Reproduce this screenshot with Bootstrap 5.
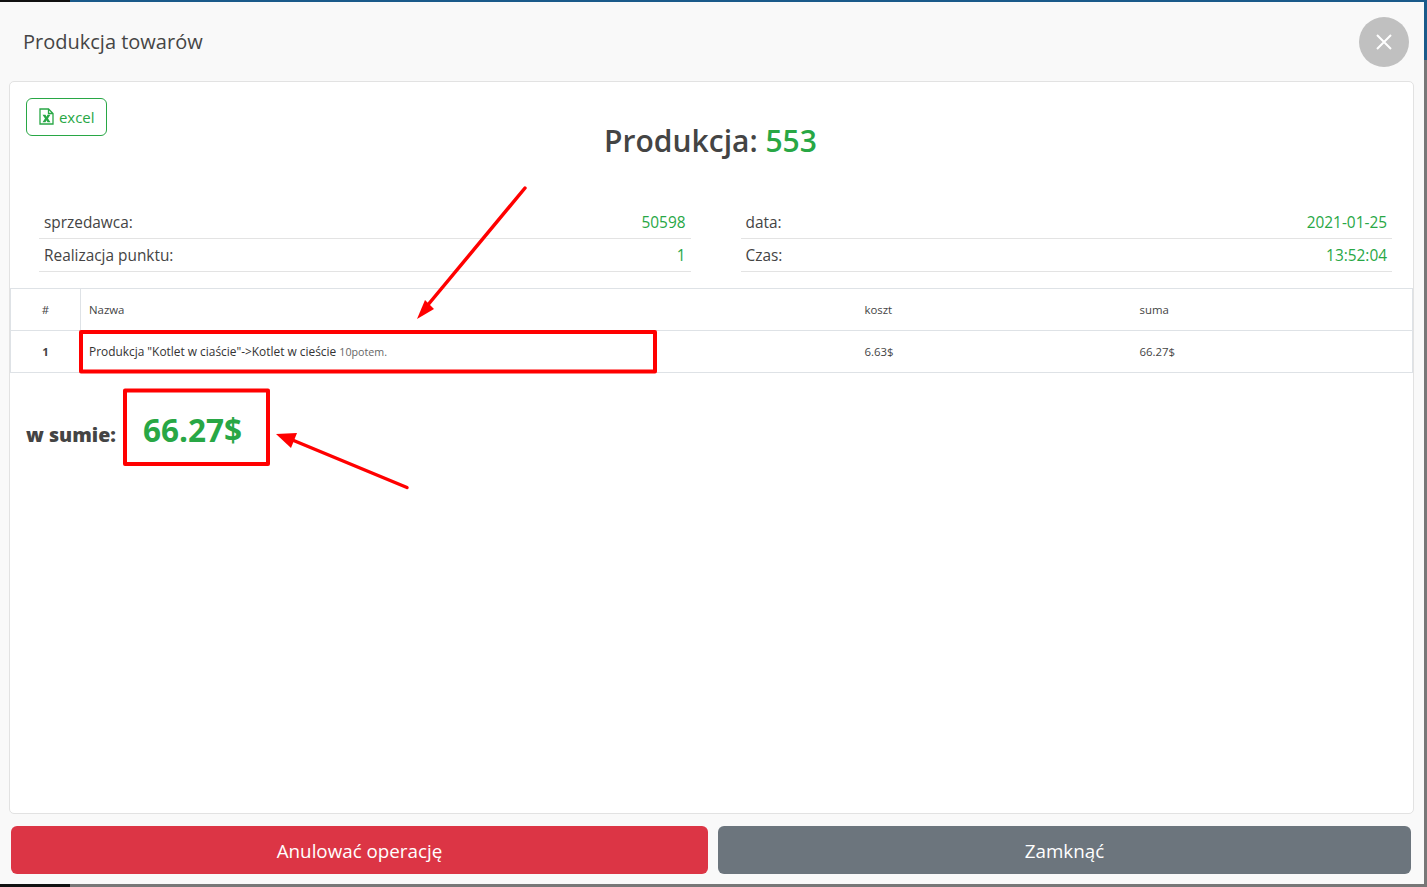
<!DOCTYPE html>
<html lang="pl">
<head>
  <meta charset="UTF-8">
  <title>Produkcja towarów</title>
  <link href="https://cdn.jsdelivr.net/npm/bootstrap@5.3.0/dist/css/bootstrap.min.css" rel="stylesheet">
  <style>
    html, body { height: 100%; overflow: hidden; }
    body { background: #777; font-family: "Open Sans", "Noto Sans", sans-serif; color: #444; position: relative; }
    .top-strip { height: 2px; background: linear-gradient(to right, #111 70px, #1a5a8a 70px); }
    .side-blue { position: absolute; right: 0; top: 0; width: 10px; height: 60px; background: #1a5a8a; }
    .bottom-black { position: absolute; left: 0; bottom: 0; width: 70px; height: 3px; background: #111; }
    .dlg { width: 1424px; height: 882px; background: #f9f9f9; position: relative; z-index: 1; }
    .dlg-head { height: 79px; padding-left: 23px; padding-right: 15px; }
    .dlg-title { font-size: 20px; color: #454545; margin: 0; font-weight: 400; }
    .close-round { width: 50px; height: 50px; border-radius: 50%; background: #c0c0c0; border: 0; padding: 0; }
    .dlg-panel { margin: 0 10px 0 9px; height: 733px; border: 1px solid #e2e2e2; border-radius: 5px; background: #fff; padding-top: 16px; }
    .excel-btn { --bs-btn-padding-x: 12px; --bs-btn-padding-y: 0; --bs-btn-font-size: 15px; height: 38px; width: 81px; line-height: 37px; color: #28a745; border-color: #28a745; white-space: nowrap; }
    .excel-btn svg { vertical-align: -2px; margin-right: 1px; }
    .panel-top { padding-left: 16px; height: 108px; position: relative; }
    .doc-title { font-size: 30px; font-weight: 600; color: #444; text-align: center; margin: 0; padding-top: 22px; padding-right: 2px; position: absolute; left: 0; right: 0; top: 0; line-height: 41px; }
    .txt-ok { color: #28a745; }
    .info-grid { padding-left: 29px; padding-right: 21px; column-gap: 50px; display: grid; grid-template-columns: 1fr 1fr; height: 82px; }
    .info-line { height: 33px; border-bottom: 1px solid #e3e3e3; padding: 0 5px 0 5px; font-size: 15.4px; line-height: 34px; color: #444; display: flex; justify-content: space-between; }
    .goods { width: 100%; font-size: 11.4px; table-layout: fixed; }
    .goods th, .goods td { height: 42px; padding: 0 8px; vertical-align: middle; font-weight: 400; color: #444; border-width: 1px 0; border-style: solid; border-color: #dee2e6; }
    .goods tr > :first-child { border-left-width: 1px; border-right-width: 1px; }
    .goods tr > :last-child { border-right-width: 1px; }
    .goods .num { text-align: center; width: 70px; }
    .goods tbody td:first-child { font-weight: 700; }
    .goods .item { color: #333; font-size: 11.9px; }
    .goods .unit { color: #666; font-size: 10.7px; }
    .total-line { padding: 25px 0 0 16px; height: 89px; display: flex; align-items: center; }
    .total-lbl { font-size: 19.6px; font-weight: 800; color: #444; width: 117px; margin-top: 9px; }
    .total-val { font-size: 31.500px; font-weight: 700; color: #28a745; }
    .dlg-foot { padding: 12px 13px 0 11px; display: flex; gap: 10px; }
    .foot-btn { height: 48px; font-size: 18.8px; padding: 2px 0 0; border: 0; }
    .foot-cancel { flex: 0 0 697px; }
    .foot-close { flex: 1 1 0; }
    .marks { position: absolute; left: 0; top: 0; z-index: 2; pointer-events: none; }
  </style>
</head>
<body>
  <div class="top-strip"></div>
  <div class="side-blue"></div>
  <div class="bottom-black"></div>

  <div class="dlg">
    <div class="dlg-head d-flex align-items-center justify-content-between">
      <h5 class="dlg-title">Produkcja towarów</h5>
      <button type="button" class="close-round d-flex align-items-center justify-content-center" aria-label="Close">
        <svg width="16" height="16" viewBox="0 0 16 16"><path d="M1 1 15 15M15 1 1 15" stroke="#fff" stroke-width="2" fill="none"/></svg>
      </button>
    </div>

    <div class="dlg-panel">
      <div class="panel-top">
        <h2 class="doc-title">Produkcja: <span class="txt-ok">553</span></h2>
        <a href="#" class="btn excel-btn position-relative">
          <svg width="15" height="17" viewBox="0 0 15 17"><path d="M1 1h8.500L14 5.500V16H1zM9.500 1v4.500H14" fill="none" stroke="#28a745" stroke-width="1.300"/><path d="M3.500 6.800h3l1 1.900 1-1.900h2.900L9 10.400l2.500 3.900H8.500l-1-2-1 2H3.500L6 10.400z" fill="#28a745"/></svg>
          excel
        </a>
      </div>

      <div class="info-grid">
        <div>
          <div class="info-line"><span>sprzedawca:</span><span class="txt-ok">50598</span></div>
          <div class="info-line"><span>Realizacja punktu:</span><span class="txt-ok">1</span></div>
        </div>
        <div>
          <div class="info-line"><span>data:</span><span class="txt-ok">2021-01-25</span></div>
          <div class="info-line"><span>Czas:</span><span class="txt-ok">13:52:04</span></div>
        </div>
      </div>

      <table class="table goods mb-0">
        <thead>
          <tr>
            <th class="num">#</th>
            <th style="width:776px">Nazwa</th>
            <th style="width:275px">koszt</th>
            <th>suma</th>
          </tr>
        </thead>
        <tbody>
          <tr>
            <td class="num">1</td>
            <td class="item">Produkcja "Kotlet w ciaście"-&gt;Kotlet w cieście <span class="unit">10potem.</span></td>
            <td>6.63$</td>
            <td>66.27$</td>
          </tr>
        </tbody>
      </table>

      <div class="total-line">
        <span class="total-lbl">w sumie:</span>
        <span class="total-val">66.27$</span>
      </div>
    </div>

    <div class="dlg-foot">
      <button type="button" class="btn btn-danger foot-btn foot-cancel">Anulować operację</button>
      <button type="button" class="btn btn-secondary foot-btn foot-close">Zamknąć</button>
    </div>
  </div>

  <!-- annotations drawn over the screenshot -->
  <svg class="marks" width="1427" height="887" viewBox="0 0 1427 887">
    <g fill="none" stroke="#f00" stroke-linejoin="round" stroke-linecap="round">
      <rect x="81" y="332" width="574" height="39.500" stroke-width="4"/>
      <rect x="125" y="390.500" width="143" height="73.500" stroke-width="4"/>
      <path d="M525 188 427 306" stroke-width="3.500"/>
      <path d="M407 487.500 290 439" stroke-width="3.500"/>
    </g>
    <path d="M417 319 425 300 434 309z" fill="#f00"/>
    <path d="M276 434 297 433 291 448z" fill="#f00"/>
  </svg>
</body>
</html>
